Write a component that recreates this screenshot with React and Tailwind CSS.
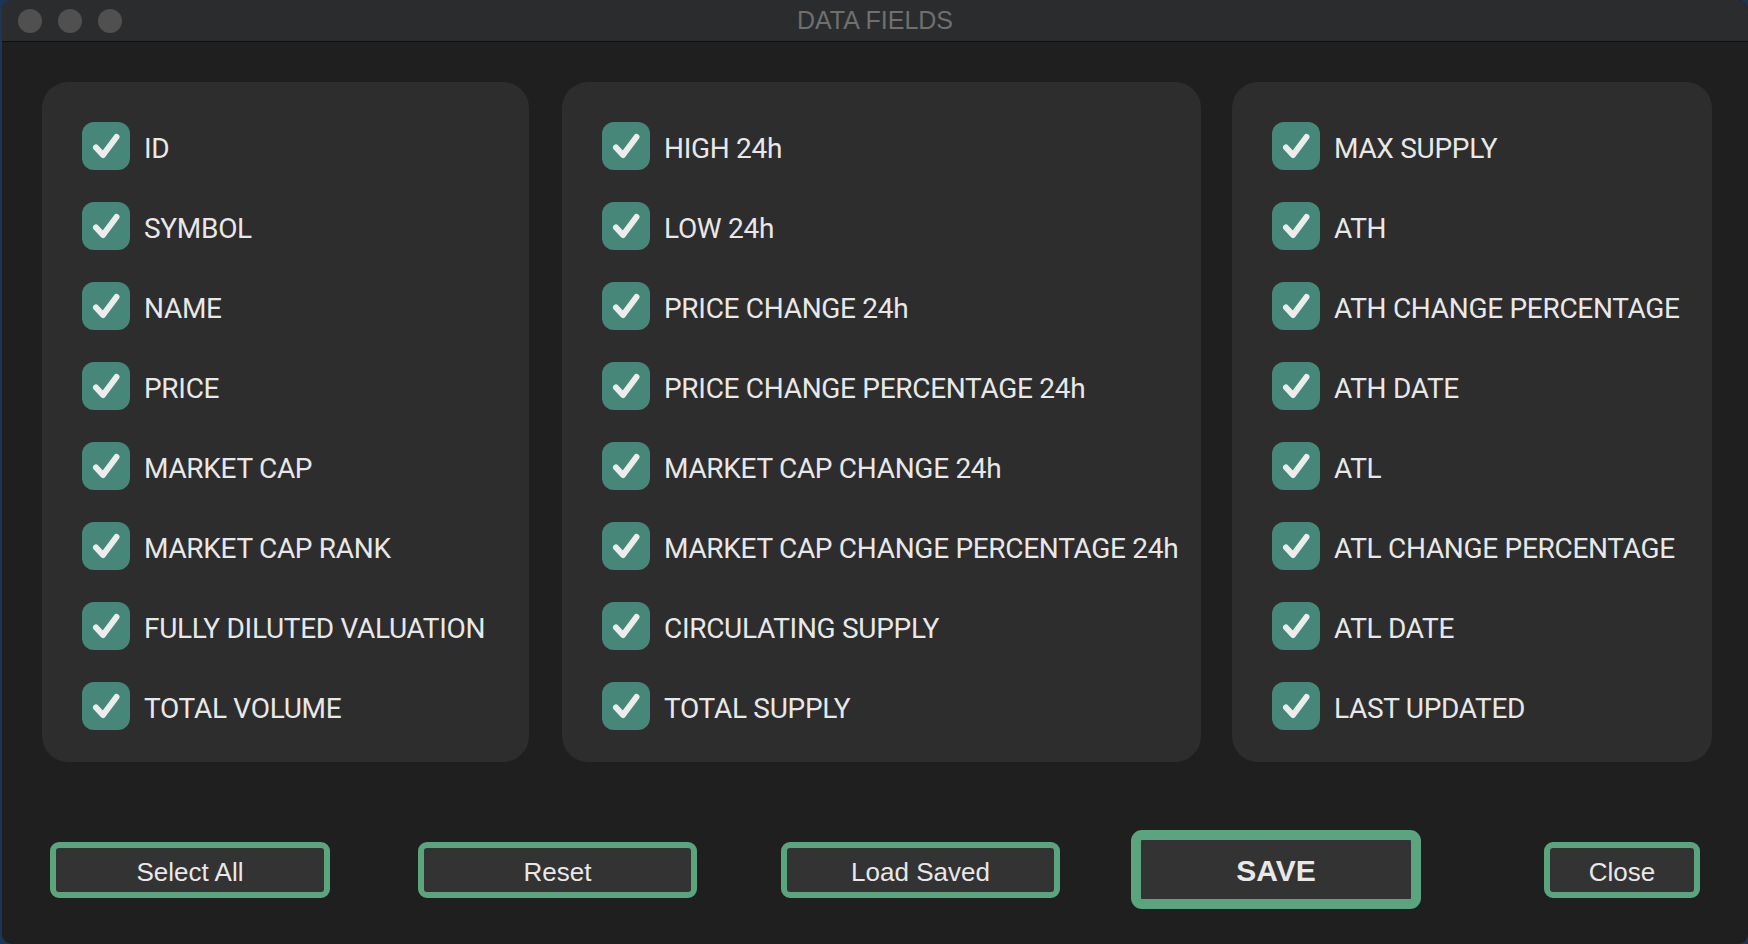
import React from "react";

const col1 = ["ID", "SYMBOL", "NAME", "PRICE", "MARKET CAP", "MARKET CAP RANK", "FULLY DILUTED VALUATION", "TOTAL VOLUME"];
const col2 = ["HIGH 24h", "LOW 24h", "PRICE CHANGE 24h", "PRICE CHANGE PERCENTAGE 24h", "MARKET CAP CHANGE 24h", "MARKET CAP CHANGE PERCENTAGE 24h", "CIRCULATING SUPPLY", "TOTAL SUPPLY"];
const col3 = ["MAX SUPPLY", "ATH", "ATH CHANGE PERCENTAGE", "ATH DATE", "ATL", "ATL CHANGE PERCENTAGE", "ATL DATE", "LAST UPDATED"];

function Check() {
  return (
    <div className="w-[48px] h-[48px] shrink-0 rounded-[12px] bg-[#468779] flex items-center justify-center">
      <svg width="48" height="48" viewBox="0 0 48 48">
        <path d="M14 25.5 L21 33 L34.5 15" fill="none" stroke="#ececec" strokeWidth="6" strokeLinecap="round" strokeLinejoin="round" />
      </svg>
    </div>
  );
}

function Panel({ items, className }) {
  return (
    <div className={"bg-[#2d2d2d] rounded-[26px] pt-[40px] pb-[32px] pl-[40px] flex flex-col gap-[32px] " + className}>
      {items.map((t) => (
        <div key={t} className="flex items-center h-[48px] gap-[14px]">
          <Check />
          <span className="text-[28px] tracking-[-0.3px] text-[#e8e8e8] whitespace-nowrap leading-none pt-[5px]" style={{ fontFamily: "Roboto, 'Liberation Sans', sans-serif" }}>
            {t}
          </span>
        </div>
      ))}
    </div>
  );
}

function Btn({ children, className }) {
  return (
    <div className={"h-[56px] border-[6px] border-[#5aa57e] rounded-[9px] bg-[#333333] flex items-center justify-center text-[26px] text-[#e8e8e8] shrink-0 pt-[5px] " + className} style={{ fontFamily: "'Liberation Sans', Arial, sans-serif" }}>
      {children}
    </div>
  );
}

export default function App() {
  return (
    <div className="w-[1748px] h-[944px] bg-[#1d3554] pl-[2px] flex overflow-hidden">
      <div className="flex-1 flex flex-col bg-[#1f1f1f] rounded-[10px] overflow-hidden">
        <div className="h-[42px] shrink-0 bg-[#2b2c2e] border-b border-[#0e0e0e] grid grid-cols-[1fr_auto_1fr] items-center">
          <div className="flex items-center gap-[16px] pl-[16px]">
            <div className="w-[24px] h-[24px] rounded-full bg-[#505050]" />
            <div className="w-[24px] h-[24px] rounded-full bg-[#505050]" />
            <div className="w-[24px] h-[24px] rounded-full bg-[#505050]" />
          </div>
          <div className="text-[25px] text-[#6f6f6f] leading-none" style={{ fontFamily: "'Liberation Sans', Arial, sans-serif" }}>
            DATA FIELDS
          </div>
          <div />
        </div>
        <div className="flex pt-[40px] pl-[40px]">
          <Panel items={col1} className="w-[487px]" />
          <Panel items={col2} className="w-[639px] ml-[33px]" />
          <Panel items={col3} className="w-[480px] ml-[31px]" />
        </div>
        <div className="flex items-center pl-[48px] mt-[68px]">
          <Btn className="w-[280px]">Select All</Btn>
          <Btn className="w-[279px] ml-[88px]">Reset</Btn>
          <Btn className="w-[279px] ml-[84px]">Load Saved</Btn>
          <div className="w-[290px] h-[79px] ml-[71px] border-[10px] border-[#5aa57e] rounded-[11px] bg-[#333333] flex items-center justify-center text-[30px] font-bold text-[#e8e8e8] shrink-0 pt-[2px]" style={{ fontFamily: "'Liberation Sans', Arial, sans-serif" }}>
            SAVE
          </div>
          <Btn className="w-[156px] ml-[123px]">Close</Btn>
        </div>
      </div>
    </div>
  );
}
